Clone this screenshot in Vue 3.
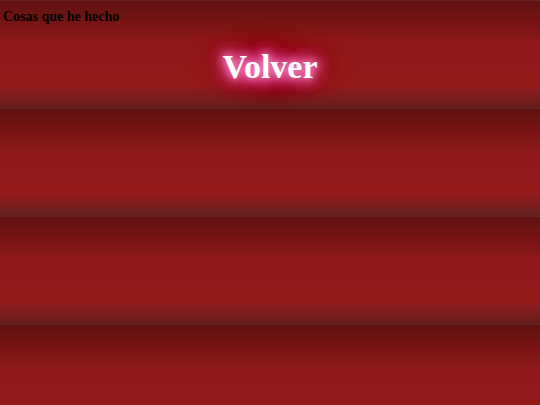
<template>
  <main class="page">
    <h1 class="title">Cosas que he hecho</h1>
    <a class="back" href="#">Volver</a>
  </main>
</template>

<script setup>
</script>

<style>
body {
  margin: 0;
}
</style>

<style scoped>
.page {
  display: flex;
  flex-direction: column;
  min-height: 100vh;
  font-family: "Liberation Serif", "Times New Roman", serif;
  background-color: #911919;
  background-image: linear-gradient(#601212 0%, #6a1312 10%, #8f1818 38%, #941a1a 78%, #632020 100%);
  background-size: 100% 108px;
  background-position: 0 1px;
}
.title {
  margin: 8px 3px 0;
  font-size: 14px;
  line-height: 18px;
  font-weight: bold;
  color: #000;
}
.back {
  align-self: center;
  margin-top: 20px;
  font-size: 34px;
  line-height: 42px;
  font-weight: bold;
  color: #fff;
  text-decoration: none;
  text-shadow:
    0 0 8px #f8a0d0,
    0 0 12px #ee60a8,
    0 0 16px #e24090,
    0 0 16px #e03c8c,
    0 0 20px #d83080,
    0 0 20px #d42c78,
    0 0 24px #cc2464,
    0 0 36px #a80028;
}
</style>
